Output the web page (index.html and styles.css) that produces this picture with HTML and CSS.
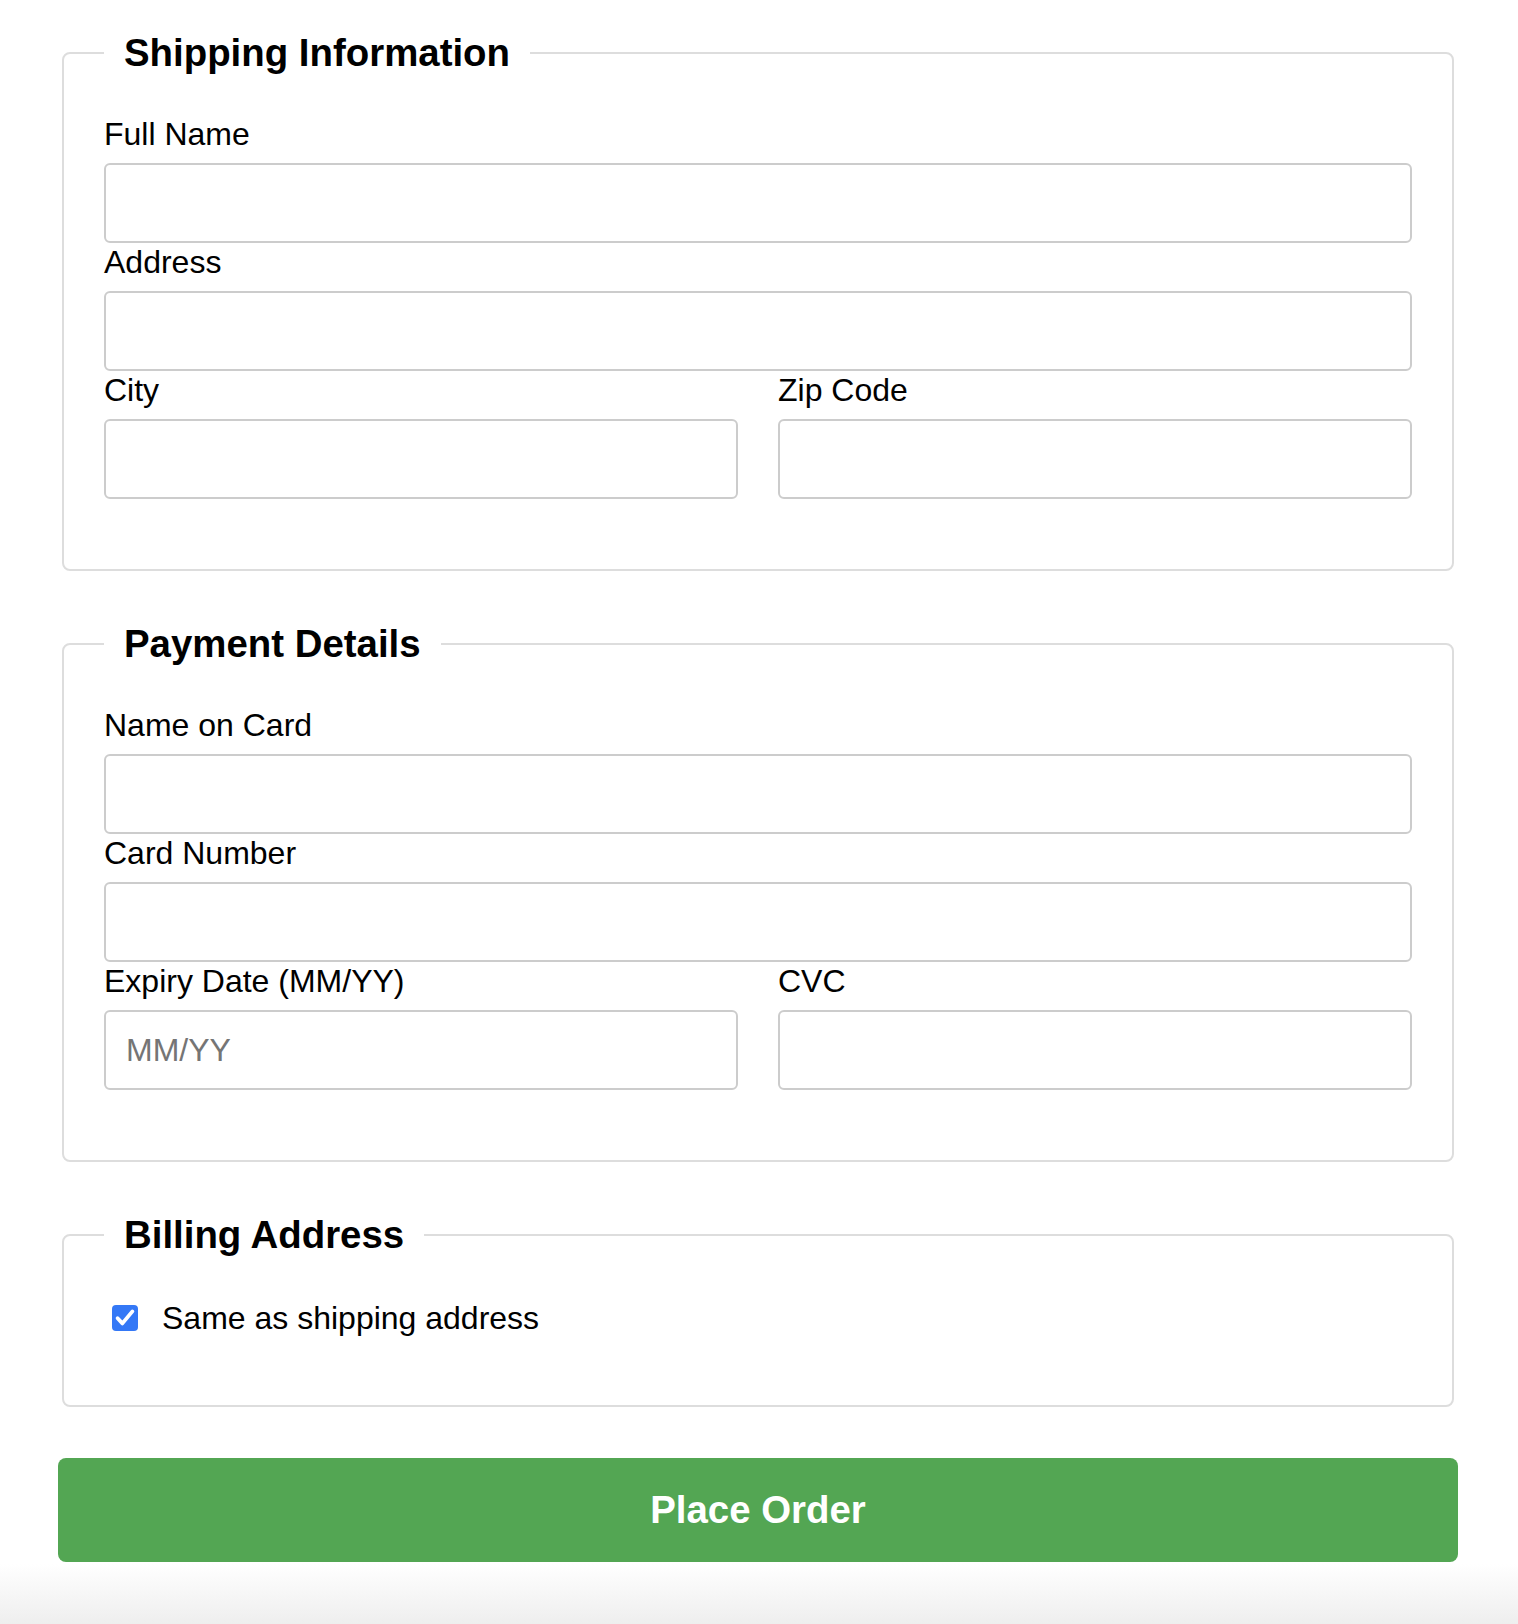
FILE: index.html
```html
<!DOCTYPE html>
<html lang="en">
<head>
<meta charset="utf-8">
<title>Checkout</title>
<link rel="stylesheet" href="styles.css">
</head>
<body>
<form class="checkout">
  <fieldset class="section">
    <legend class="section-title">Shipping Information</legend>
    <label class="field-label" for="fullname">Full Name</label>
    <input class="field-input" type="text" id="fullname">
    <label class="field-label" for="address">Address</label>
    <input class="field-input" type="text" id="address">
    <div class="row">
      <div class="col">
        <label class="field-label" for="city">City</label>
        <input class="field-input" type="text" id="city">
      </div>
      <div class="col">
        <label class="field-label" for="zip">Zip Code</label>
        <input class="field-input" type="text" id="zip">
      </div>
    </div>
  </fieldset>

  <fieldset class="section">
    <legend class="section-title">Payment Details</legend>
    <label class="field-label" for="cardname">Name on Card</label>
    <input class="field-input" type="text" id="cardname">
    <label class="field-label" for="cardnum">Card Number</label>
    <input class="field-input" type="text" id="cardnum">
    <div class="row">
      <div class="col">
        <label class="field-label" for="expiry">Expiry Date (MM/YY)</label>
        <input class="field-input" type="text" id="expiry" placeholder="MM/YY">
      </div>
      <div class="col">
        <label class="field-label" for="cvc">CVC</label>
        <input class="field-input" type="text" id="cvc">
      </div>
    </div>
  </fieldset>

  <fieldset class="section section-billing">
    <legend class="section-title">Billing Address</legend>
    <label class="check">
      <input class="check-input" type="checkbox" checked>
      <span class="check-box" aria-hidden="true">
        <svg width="26" height="26" viewBox="0 0 26 26"><path d="M5.6 13.2 L10.4 18.4 L20.4 6.4" fill="none" stroke="#fff" stroke-width="3.8" stroke-linecap="round" stroke-linejoin="round"/></svg>
      </span>
      <span class="check-text">Same as shipping address</span>
    </label>
  </fieldset>

  <button class="submit" type="submit">Place Order</button>
</form>
</body>
</html>
```
FILE: styles.css
```css
html {
  background: #ffffff;
}

body {
  margin: 0;
  min-height: 100vh;
  box-sizing: border-box;
  padding: 31px 60px 0 58px;
  font-family: "Liberation Sans", Arial, Helvetica, sans-serif;
  color: #000;
  background: linear-gradient(180deg, #ffffff 0, #ffffff calc(100% - 60px), #eeeeee 100%);
}

.checkout {
  margin: 0;
}

.section {
  margin: 0 4px 51px;
  padding: 40px 40px 70px;
  border: 2px solid #dddddd;
  border-radius: 8px;
  background: #fff;
  min-width: 0;
}

.section-billing {
  padding-top: 42px;
  padding-bottom: 68px;
}

.section-title {
  padding: 0 20px;
  font-size: 38.4px;
  line-height: 44px;
  font-weight: bold;
}

.field-label {
  display: block;
  font-size: 32px;
  line-height: 38px;
  margin-bottom: 10px;
}

.field-input {
  display: block;
  width: 100%;
  height: 80px;
  box-sizing: border-box;
  margin: 0;
  padding: 0 20px;
  border: 2px solid #cccccc;
  border-radius: 6px;
  font-family: "Liberation Sans", Arial, Helvetica, sans-serif;
  font-size: 32px;
  color: #000;
  background: #fff;
}

.field-input::placeholder {
  color: #757575;
}

.row {
  display: grid;
  grid-template-columns: 1fr 1fr;
  column-gap: 40px;
}

.check {
  display: flex;
  align-items: center;
  font-size: 32px;
  line-height: 38px;
}

.check-input {
  position: absolute;
  opacity: 0;
  width: 1px;
  height: 1px;
  margin: 0;
}

.check-box {
  display: flex;
  width: 26px;
  height: 26px;
  margin: 0 24px 0 8px;
  border-radius: 4px;
  background: #3478f6;
}

.check-box svg {
  display: block;
}

.submit {
  display: block;
  width: 100%;
  height: 104px;
  margin: 0;
  padding: 0;
  border: none;
  border-radius: 8px;
  background: #53a653;
  color: #fff;
  font-family: "Liberation Sans", Arial, Helvetica, sans-serif;
  font-size: 38.4px;
  font-weight: bold;
  line-height: 44px;
  cursor: pointer;
}
```
